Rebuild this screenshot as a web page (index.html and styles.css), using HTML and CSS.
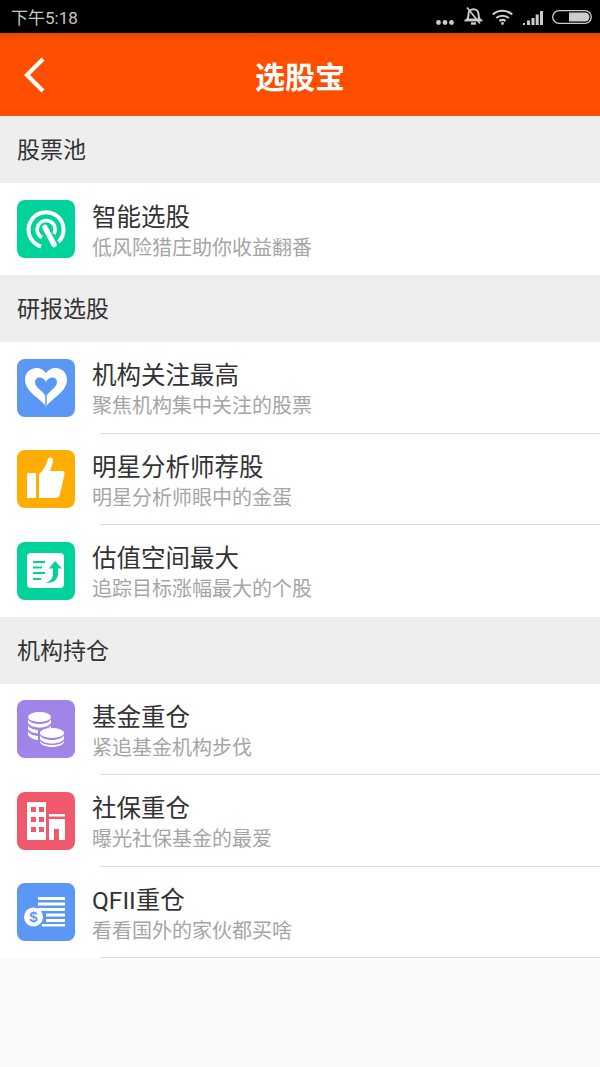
FILE: index.html
```html
<!DOCTYPE html>
<html lang="zh-CN">
<head>
    <meta charset="UTF-8">
    <meta name="viewport" content="width=device-width, initial-scale=1.0">
    <title>选股宝</title>
    <link rel="stylesheet" href="styles.css">
</head>
<body>
    <!-- 状态栏 -->
    <div class="status-bar">
        <span class="status-time">下午5:18</span>
        <div class="status-icons">
            <svg width="18" height="5" viewBox="0 0 18 5"><g fill="#ccc"><circle cx="2.500" cy="2.500" r="2.400"/><circle cx="9" cy="2.500" r="2.400"/><circle cx="15.500" cy="2.500" r="2.400"/></g></svg>
            <svg width="19" height="18" viewBox="0 0 19 18" fill="none" stroke="#ccc"><path d="M3 12.500c1.500-1.500 1.500-3 1.500-5.500 0-3 2.200-4.800 5-4.800s5 1.800 5 4.800c0 2.500 0 4 1.500 5.500z" stroke-width="2"/><path d="M.5 13.500h18" stroke-width="1.800"/><path d="M7 16.500h5" stroke-width="2.400"/><path d="M3 .5l13 16" stroke-width="1.700"/></svg>
            <svg width="21" height="16" viewBox="0 0 21 16" fill="none" stroke="#ccc" stroke-width="2.200"><path d="M.8 5.500c5.400-5 14-5 19.400 0"/><path d="M4.200 9c3.500-3 9.100-3 12.600 0"/><path d="M7.500 12c1.800-1.300 4.200-1.300 6 0"/><circle cx="10.500" cy="14.500" r="1.400" fill="#ccc" stroke="none"/></svg>
            <svg width="20" height="14" viewBox="0 0 20 14" fill="#ccc"><path d="M0 12h2v2h-2zM4 9.500h3v4.500h-3zM8.500 7h3v7h-3zM12.700 3.500h3V14h-3zM17 0h3v14h-3z"/></svg>
            <svg class="battery" width="40" height="14" viewBox="0 0 40 14"><rect x=".7" y=".7" width="38.600" height="12.600" rx="6.300" fill="none" stroke="#ccc" stroke-width="1.300"/><path d="M17 2.500h16a4.500 4.500 0 0 1 0 9H17z" fill="#ccc"/></svg>
        </div>
    </div>

    <!-- 标题栏 -->
    <header class="top-bar">
        <svg class="back-icon" width="22" height="36" viewBox="0 0 22 36" fill="none" stroke="#fff" stroke-width="4.200"><path d="M20 2L4 18l16 16"/></svg>
        <h1>选股宝</h1>
    </header>

    <!-- 列表 -->
    <div class="section-title">股票池</div>
    <div class="row row-single">
        <div class="icon icon-green">
            <svg width="58" height="58" viewBox="0 0 58 58" fill="none" stroke="#fff"><path d="M24 46.500A17.500 17.500 0 1 1 41.500 42" stroke-width="4"/><path d="M25 37.500A9 9 0 1 1 37 34" stroke-width="3.600"/><path d="M28 27.500L37 44.500" stroke-width="5.500" stroke-linecap="round"/></svg>
        </div>
        <div class="row-text">
            <div class="row-name">智能选股</div>
            <div class="row-desc">低风险猎庄助你收益翻番</div>
        </div>
    </div>

    <div class="section-title">研报选股</div>
    <div class="row">
        <div class="icon icon-blue">
            <svg width="58" height="58" viewBox="0 0 58 58"><path fill="#fff" d="M29 49c-1-4-4-6-8-9.500C14.500 34 8 29 8 20.500 8 14 13 9 19.500 9c4 0 7.500 2 9.500 5 2-3 5.500-5 9.500-5C45 9 50 14 50 20.500c0 8.500-6.500 13.500-13 19-4 3.500-7 5.500-8 9.500z"/><path fill="#5b97f5" d="M29 38.500c-1-3-3-5-5.500-7.200-2.800-2.500-5.500-5-5.500-8.300 0-2.700 2-4.500 4.500-4.500 2.800 0 5 1.500 6.500 4.500 1.500-3 3.700-4.500 6.500-4.500 2.500 0 4.500 1.800 4.500 4.500 0 3.300-2.700 5.800-5.500 8.300-2.500 2.200-4.500 4.200-5.500 7.200z"/><path d="M29 37v13" stroke="#5b97f5" stroke-width="1.500"/></svg>
        </div>
        <div class="row-text">
            <div class="row-name">机构关注最高</div>
            <div class="row-desc">聚焦机构集中关注的股票</div>
        </div>
    </div>
    <div class="row">
        <div class="icon icon-orange">
            <svg width="58" height="58" viewBox="0 0 58 58" fill="#fff"><rect x="10" y="23" width="9" height="25" rx="1"/><path d="M22 48V24c4-3 7-8 9-15 .7-2.500 5.500-2 5 2-.5 3-1.500 6-3 10h12c2.500 0 3 1.500 2.500 3.500L43 44c-.7 2.500-2 4-4.500 4z"/></svg>
        </div>
        <div class="row-text">
            <div class="row-name">明星分析师荐股</div>
            <div class="row-desc">明星分析师眼中的金蛋</div>
        </div>
    </div>
    <div class="row row-plain">
        <div class="icon icon-green">
            <svg width="58" height="58" viewBox="0 0 58 58"><rect x="10" y="11" width="37" height="35" rx="4" fill="#fff"/><g fill="none" stroke="#00d29b" stroke-width="2"><path d="M16 20h12M16 25.500h9M16 31h12M16 37h8"/></g><path fill="#00d29b" d="M38 19l7 7.500h-4V31c0 6-3 10-12 10h-1c5-1.500 8-4 8-10v-4.500h-4z"/></svg>
        </div>
        <div class="row-text">
            <div class="row-name">估值空间最大</div>
            <div class="row-desc">追踪目标涨幅最大的个股</div>
        </div>
    </div>

    <div class="section-title">机构持仓</div>
    <div class="row">
        <div class="icon icon-purple">
            <svg width="58" height="58" viewBox="0 0 58 58"><g fill="#fff"><ellipse cx="22.500" cy="17" rx="11.500" ry="5"/><path d="M11 19.500c2 3 6.500 4.500 11.500 4.500S32 22.500 34 19.500v3.500c-2 3-6.500 4.500-11.500 4.500S13 26 11 23zM11 25.500c2 3 6.500 4.500 11.500 4.500S32 28.500 34 25.500V29c-2 3-6.500 4.500-11.500 4.500S13 32 11 29zM11 31.500c2 3 6.500 4.500 11.500 4.500S32 34.500 34 31.500V35c-2 3-6.500 5-11.500 5S13 38 11 35z"/></g><path fill="#a084e8" d="M21 28h28v22H21z"/><g fill="#fff"><ellipse cx="35" cy="33" rx="12" ry="5"/><path d="M23 35.500c2 3 7 4.500 12 4.500s10-1.500 12-4.500V39c-2 3-7 4.500-12 4.500S25 42 23 39zM23 41c2 3 7 4 12 4s10-1 12-4v1.500c-2 3-7 4.500-12 4.500s-10-1.500-12-4.500z"/></g></svg>
        </div>
        <div class="row-text">
            <div class="row-name">基金重仓</div>
            <div class="row-desc">紧追基金机构步伐</div>
        </div>
    </div>
    <div class="row">
        <div class="icon icon-red">
            <svg width="58" height="58" viewBox="0 0 58 58"><path fill="#fff" fill-rule="evenodd" d="M10 10h19v38H10zM14 15v5h5v-5zM22 15v5h5v-5zM14 25v5h5v-5zM22 25v5h5v-5zM14 35v5h5v-5zM22 35v5h5v-5z"/><path fill="#fff" d="M32 22h16v2.500H32z"/><path fill="#fff" fill-rule="evenodd" d="M32 27h16v21h-6v-11h-5v11h-5z"/></svg>
        </div>
        <div class="row-text">
            <div class="row-name">社保重仓</div>
            <div class="row-desc">曝光社保基金的最爱</div>
        </div>
    </div>
    <div class="row">
        <div class="icon icon-blue">
            <svg width="58" height="58" viewBox="0 0 58 58"><g fill="#fff"><path d="M21 14h27v3H21zM21 19.500h27v3H21zM21 25h27v3H21zM29 30.500h19v3H29zM29 36h19v3H29zM25 41h23v2.500H25z"/><circle cx="16.500" cy="34" r="9.500"/></g><text class="dollar" x="16.500" y="39" text-anchor="middle">$</text></svg>
        </div>
        <div class="row-text">
            <div class="row-name">QFII重仓</div>
            <div class="row-desc">看看国外的家伙都买啥</div>
        </div>
    </div>
</body>
</html>
```

FILE: styles.css
```css
/* 全局 */
body {
    font-family: 'Roboto', 'Noto Sans CJK SC', sans-serif;
    margin: 0;
    padding: 0;
    height: 1067px;
    overflow: hidden;
    background-color: #fafafa;
    color: #333;
}

/* 状态栏 */
.status-bar {
    height: 33px;
    box-sizing: border-box;
    background-color: #000;
    display: flex;
    justify-content: space-between;
    align-items: center;
    padding: 0 8px 2px 11px;
}

.status-time {
    font-size: 17px;
    margin-top: 1px;
    color: #c8c8c8;
}

.status-icons {
    display: flex;
    align-items: flex-end;
    gap: 9.500px;
}

.battery {
    margin-bottom: 1px;
}

/* 标题栏 */
.top-bar {
    position: relative;
    height: 83px;
    background: linear-gradient(#e84800, #ff4e00 10px);
    display: flex;
    justify-content: center;
    align-items: center;
}

.top-bar h1 {
    margin: 0;
    font-size: 30px;
    font-weight: bold;
    color: #fff;
}

.back-icon {
    position: absolute;
    left: 23px;
    top: 24px;
}

/* 列表 */
.section-title {
    height: 67px;
    line-height: 69px;
    padding-left: 17px;
    font-size: 23px;
    color: #333;
    background-color: #eee;
}

.row {
    height: 91.500px;
    box-sizing: border-box;
    display: flex;
    align-items: center;
    padding-left: 17px;
    background: #fff linear-gradient(#ddd, #ddd) no-repeat 100px 100% / 500px 1px;
}

.row-single {
    height: 92px;
    background-image: none;
}

.row-plain {
    background-image: none;
}

.icon {
    width: 58px;
    height: 58px;
    border-radius: 8px;
    flex-shrink: 0;
}

.icon svg {
    display: block;
}

.icon-green { background-color: #00d29b; }
.icon-blue { background-color: #5b97f5; }
.icon-orange { background-color: #ffad00; }
.icon-purple { background-color: #a084e8; }
.icon-red { background-color: #f0596c; }

.dollar {
    font-family: 'Liberation Sans', sans-serif;
    font-size: 15px;
    font-weight: bold;
    fill: #5b97f5;
}

.row-text {
    margin-left: 17px;
    padding-top: 4px;
}

.row-name {
    font-size: 24.500px;
    line-height: 32px;
    color: #333;
}

.row-desc {
    font-size: 20px;
    line-height: 26px;
    margin-top: 1px;
    color: #a5a5a5;
}
```
